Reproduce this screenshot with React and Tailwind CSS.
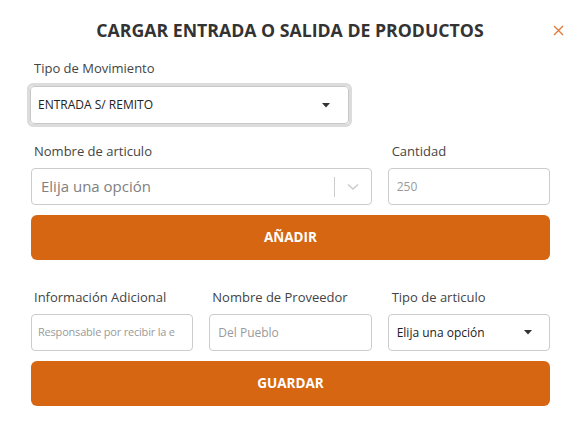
import React from "react";

const Caret = () => (
  <svg width="8" height="5" viewBox="0 0 8 5" className="shrink-0">
    <path d="M0 0 L8 0 L4 4.5 Z" fill="#333" />
  </svg>
);

export default function App() {
  return (
    <div className="w-[580px] h-[421px] bg-white text-[#333] font-['Open_Sans',sans-serif] relative">
      <div className="flex items-center justify-center pt-[15px] h-[45px]">
        <h1 className="text-[17.7px] font-bold text-[#333]">CARGAR ENTRADA O SALIDA DE PRODUCTOS</h1>
      </div>
      <button className="absolute left-[552px] top-[24px] w-[12px] h-[12px] flex items-center justify-center">
        <svg width="11" height="11" viewBox="0 0 11 11">
          <path d="M1 1 L10 10 M10 1 L1 10" stroke="#e07b39" strokeWidth="1.4" />
        </svg>
      </button>

      <div className="px-[31px] pr-[30px]">
        <div className="mt-[14px] pl-[3px] text-[13px] text-[#444] leading-[18px]">Tipo de Movimiento</div>
        <div className="mt-[6px] ml-[-4px] w-[325px] h-[44px] rounded-[6px] border-[3px] border-[#dcdcdc] p-0">
          <div className="h-full rounded-[4px] border border-[#c8c8c8] bg-white flex items-center justify-between pl-[7px] pr-[18px]">
            <span className="text-[12px] text-[#222]">ENTRADA S/ REMITO</span>
            <Caret />
          </div>
        </div>

        <div className="grid grid-cols-3 gap-x-[16px] mt-[15px]">
          <div className="col-span-2">
            <div className="pl-[3px] text-[13px] text-[#444] leading-[18px]">Nombre de articulo</div>
            <div className="mt-[8px] h-[37px] rounded-[4px] border border-[#ccc] flex items-center">
              <span className="flex-1 pl-[9px] text-[15px] text-[#808080]">Elija una opción</span>
              <span className="w-px h-[20px] bg-[#ccc]"></span>
              <span className="w-[36px] flex items-center justify-center">
                <svg width="12" height="8" viewBox="0 0 12 8">
                  <path d="M1 1.5 L6 6 L11 1.5" stroke="#ccc" strokeWidth="1.6" fill="none" />
                </svg>
              </span>
            </div>
          </div>
          <div>
            <div className="pl-[4px] text-[13px] text-[#444] leading-[18px]">Cantidad</div>
            <div className="mt-[8px] h-[37px] rounded-[4px] border border-[#ccc] flex items-center pl-[8px]">
              <span className="text-[12px] text-[#9a9a9a]">250</span>
            </div>
          </div>
        </div>

        <button className="mt-[10px] w-full h-[45px] rounded-[6px] bg-[#d66611] text-white text-[13.5px] font-bold">AÑADIR</button>

        <div className="grid grid-cols-3 gap-x-[16px] mt-[28px]">
          <div>
            <div className="pl-[3px] text-[13px] text-[#444] leading-[18px]">Información Adicional</div>
            <div className="mt-[8px] h-[37px] rounded-[4px] border border-[#ccc] flex items-center pl-[6px] whitespace-nowrap">
              <span className="text-[11px] tracking-[-0.2px] text-[#9a9a9a]">Responsable por recibir la e</span>
            </div>
          </div>
          <div>
            <div className="pl-[3px] text-[13px] text-[#444] leading-[18px]">Nombre de Proveedor</div>
            <div className="mt-[8px] h-[37px] rounded-[4px] border border-[#ccc] flex items-center pl-[8px]">
              <span className="text-[12px] text-[#9a9a9a]">Del Pueblo</span>
            </div>
          </div>
          <div>
            <div className="pl-[4px] text-[13px] text-[#444] leading-[18px]">Tipo de articulo</div>
            <div className="mt-[8px] h-[37px] rounded-[4px] border border-[#ccc] flex items-center justify-between pl-[8px] pr-[17px]">
              <span className="text-[12px] text-[#222]">Elija una opción</span>
              <Caret />
            </div>
          </div>
        </div>

        <button className="mt-[10px] w-full h-[45px] rounded-[6px] bg-[#d66611] text-white text-[13.5px] font-bold">GUARDAR</button>
      </div>
    </div>
  );
}
